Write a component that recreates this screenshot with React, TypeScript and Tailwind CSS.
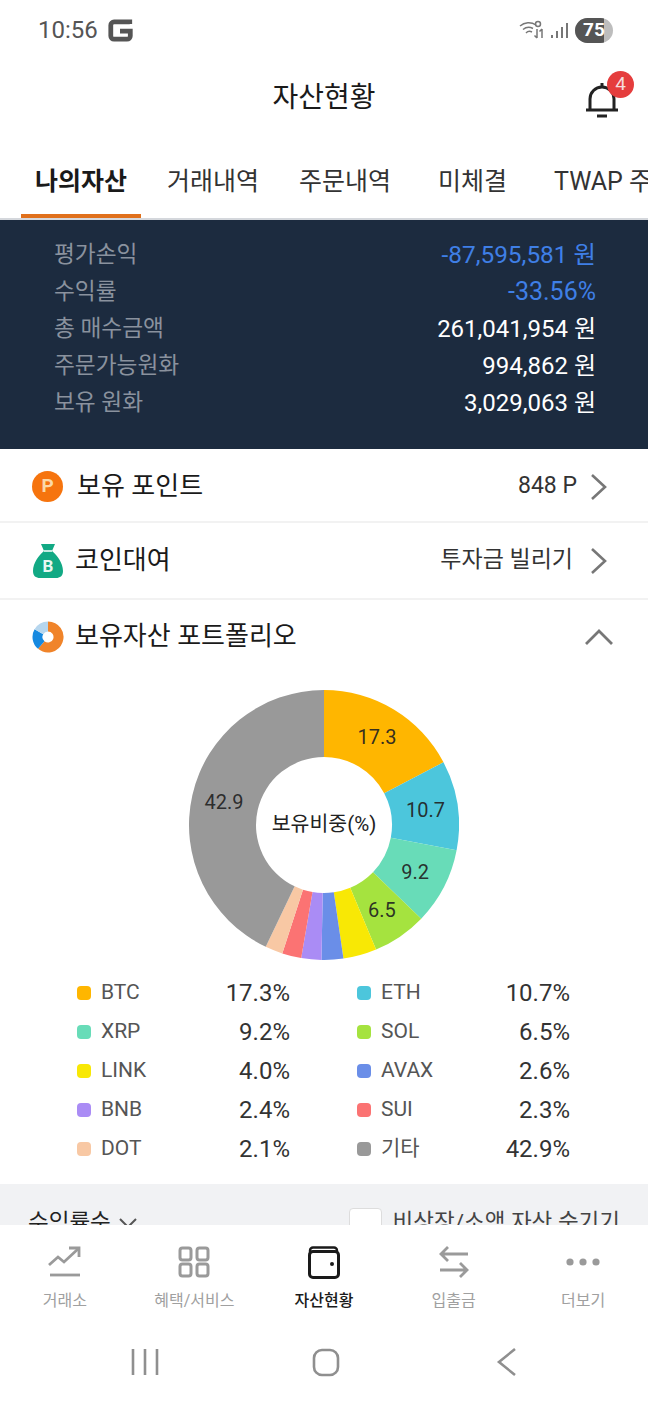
import React from "react";

const font = { fontFamily: 'Roboto, "Noto Sans CJK KR", sans-serif' };

const slices = [
  { v: 17.3, c: "#ffb600", n: "BTC", l: "17.3" },
  { v: 10.7, c: "#4cc6dc", n: "ETH", l: "10.7" },
  { v: 9.2, c: "#68dcb8", n: "XRP", l: "9.2" },
  { v: 6.5, c: "#a5e33f", n: "SOL", l: "6.5" },
  { v: 4.0, c: "#f8e805", n: "LINK" },
  { v: 2.6, c: "#6a8ee8", n: "AVAX" },
  { v: 2.4, c: "#aa8cf5", n: "BNB" },
  { v: 2.3, c: "#fb7373", n: "SUI" },
  { v: 2.1, c: "#f8c8a4", n: "DOT" },
  { v: 42.9, c: "#999999", n: "기타", l: "42.9" },
];

function Donut() {
  const cx = 135, cy = 135, R = 135, r = 68;
  let acc = 0;
  const pt = (rad: number, p: number) => {
    const a = (p / 100) * 2 * Math.PI;
    return [cx + rad * Math.sin(a), cy - rad * Math.cos(a)];
  };
  return (
    <svg width="270" height="270" viewBox="0 0 270 270" className="block">
      {slices.map((s) => {
        const a0 = acc;
        const a1 = acc + s.v;
        acc = a1;
        const [x0, y0] = pt(R, a0);
        const [x1, y1] = pt(R, a1);
        const [x2, y2] = pt(r, a1);
        const [x3, y3] = pt(r, a0);
        const mid = pt(R * 0.76, (a0 + a1) / 2);
        return (
          <g key={s.n}>
            <path
              d={`M${x0} ${y0}A${R} ${R} 0 0 1 ${x1} ${y1}L${x2} ${y2}A${r} ${r} 0 0 0 ${x3} ${y3}Z`}
              fill={s.c}
            />
            {s.l && (
              <text x={mid[0]} y={mid[1]} textAnchor="middle" dominantBaseline="central" fontSize="20" fill="#222" fillOpacity="0.92" style={font}>
                {s.l}
              </text>
            )}
          </g>
        );
      })}
      <text x="135" y="134" textAnchor="middle" dominantBaseline="central" fontSize="20.5" fill="#222" style={font}>
        보유비중(%)
      </text>
    </svg>
  );
}

const summary = [
  ["평가손익", "-87,595,581 원", "text-[#3f7fe6] text-[24.4px]"],
  ["수익률", "-33.56%", "text-[#3f7fe6] text-[25px]"],
  ["총 매수금액", "261,041,954 원", "text-white text-[24px]"],
  ["주문가능원화", "994,862 원", "text-white text-[24px]"],
  ["보유 원화", "3,029,063 원", "text-white text-[24px]"],
];

const legend = [
  ["BTC", "17.3%", "#ffb600"], ["ETH", "10.7%", "#4cc6dc"],
  ["XRP", "9.2%", "#68dcb8"], ["SOL", "6.5%", "#a5e33f"],
  ["LINK", "4.0%", "#f8e805"], ["AVAX", "2.6%", "#6a8ee8"],
  ["BNB", "2.4%", "#aa8cf5"], ["SUI", "2.3%", "#fb7373"],
  ["DOT", "2.1%", "#f8c8a4"], ["기타", "42.9%", "#999999"],
];

const Chevron = () => (
  <svg width="20" height="30" viewBox="0 0 20 30" fill="none" stroke="#777" strokeWidth="2.6">
    <path d="M3 3l13 12L3 27" />
  </svg>
);

const navGray = "#9a9a9a";
const navItems = [
  {
    t: "거래소",
    i: (
      <svg width="36" height="36" viewBox="0 0 36 36" fill="none" stroke={navGray} strokeWidth="2.8">
        <path d="M2 21l9-8 6 5L31 5" /><path d="M22 4h10v9" /><path d="M3 31h30" />
      </svg>
    ),
  },
  {
    t: "혜택/서비스",
    i: (
      <svg width="34" height="34" viewBox="0 0 34 34" fill="none" stroke={navGray} strokeWidth="3">
        <rect x="3" y="3" width="11" height="12" rx="2.5" /><rect x="20" y="3" width="11" height="12" rx="2.5" />
        <rect x="3" y="19" width="11" height="12" rx="2.5" /><rect x="20" y="19" width="11" height="12" rx="2.5" />
      </svg>
    ),
  },
  {
    t: "자산현황",
    active: true,
    i: (
      <svg width="36" height="36" viewBox="0 0 36 36" fill="none" stroke="#1a1a1a" strokeWidth="3">
        <path d="M4 10V6.5A3 3 0 0 1 7 3.5h21a3 3 0 0 1 3 3V9" strokeWidth="2.4" />
        <rect x="3.5" y="7.5" width="29" height="26" rx="3.5" />
        <circle cx="26" cy="20" r="2" fill="#1a1a1a" stroke="none" />
      </svg>
    ),
  },
  {
    t: "입출금",
    i: (
      <svg width="34" height="34" viewBox="0 0 34 34" fill="none" stroke={navGray} strokeWidth="2.8">
        <path d="M31 9H5M11 2L4 9l7 7" /><path d="M3 25h26M23 18l7 7-7 7" />
      </svg>
    ),
  },
  {
    t: "더보기",
    i: (
      <svg width="36" height="36" viewBox="0 0 36 36" fill={navGray}>
        <circle cx="5" cy="18" r="3.6" /><circle cx="18" cy="18" r="3.6" /><circle cx="31" cy="18" r="3.6" />
      </svg>
    ),
  },
];

function StatusBar() {
  return (
    <div className="flex h-[60px] items-center justify-between pl-[38px] pr-[35px]">
      <div className="flex items-center gap-[9px]">
        <span className="text-[24px] text-[#555]">10:56</span>
        <svg width="26" height="26" viewBox="0 0 24 24" fill="none" stroke="#555" strokeWidth="4.4">
          <path d="M21 6.5V4.5H6.5A3 3 0 0 0 3.5 7.5v10a3 3 0 0 0 3 3h12a3 3 0 0 0 3-3v-4.5H12" />
        </svg>
      </div>
      <div className="flex items-center gap-[3px]">
        <svg width="28" height="22" viewBox="0 0 28 22" fill="none" stroke="#777" strokeWidth="1.5">
          <path d="M1 7a13 13 0 0 1 16-1M4 10.500a9 9 0 0 1 10-1M7 14a5 5 0 0 1 6-1" />
          <path d="M18 10v9M15.500 16.500l2.500 2.500M23 19v-9M20.500 12.500l2.500-2.500" />
          <circle cx="19" cy="5" r="2.500" />
        </svg>
        <svg width="20" height="20" viewBox="0 0 20 20" fill="#777">
          <rect x="1" y="15" width="2" height="3" /><rect x="6" y="11" width="2" height="7" />
          <rect x="11" y="7" width="2" height="11" /><rect x="16" y="3" width="2" height="15" />
        </svg>
        <div className="relative ml-[2px] flex h-[25px] w-[38px] items-center justify-center overflow-hidden rounded-full bg-[#bdbdbd]">
          <div className="absolute inset-y-0 left-0 w-[29px] bg-[#555]" />
          <span className="relative text-[19px] font-bold text-white">75</span>
        </div>
      </div>
    </div>
  );
}

export default function App() {
  return (
    <div className="flex h-[1404px] w-[648px] flex-col overflow-hidden bg-white" style={font}>
      <StatusBar />
      <header className="relative flex h-[75px] shrink-0 items-center justify-center">
        <h1 className="text-[28px] text-[#1a1a1a]">자산현황</h1>
        <div className="absolute right-[14px] top-[11px] h-[52px] w-[52px]">
          <svg width="40" height="44" viewBox="0 0 40 44" fill="none" stroke="#222" strokeWidth="3" className="absolute left-0 top-[7px]">
            <path d="M4 32h32M8 31V21a12 12 0 0 1 24 0v10" /><path d="M20 5v4M15 38h10" />
          </svg>
          <div className="absolute right-0 top-0 flex h-[27px] w-[27px] items-center justify-center rounded-full bg-[#e53d3d] text-[19px] text-[#f6dcdc]">4</div>
        </div>
      </header>
      <nav className="flex h-[85px] shrink-0 items-end overflow-hidden whitespace-nowrap border-b-2 border-[#d4d7dc] text-[25px] text-[#333]">
        <div className="ml-[21px] flex h-[83px] w-[120px] shrink-0 items-center justify-center border-b-4 border-[#e0701c] pt-[14px] font-bold text-[#1a1a1a]">나의자산</div>
        <div className="ml-[26px] flex h-[83px] shrink-0 items-center pt-[14px] pb-[4px]">거래내역</div>
        <div className="ml-[40px] flex h-[83px] shrink-0 items-center pt-[14px] pb-[4px]">주문내역</div>
        <div className="ml-[47px] flex h-[83px] shrink-0 items-center pt-[14px] pb-[4px]">미체결</div>
        <div className="ml-[47px] flex h-[83px] shrink-0 items-center pt-[14px] pb-[4px]">TWAP 주문</div>
      </nav>
      <section className="flex h-[229px] shrink-0 flex-col bg-[#1c2b3f] pl-[54px] pr-[52px] pt-[17px]">
        {summary.map(([a, b, c]) => (
          <div key={a} className="flex h-[36.8px] items-center justify-between">
            <span className="text-[22.7px] text-[#8a929e]">{a}</span>
            <span className={c}>{b}</span>
          </div>
        ))}
      </section>
      <div className="flex h-[74px] shrink-0 items-center justify-between border-b-2 border-[#f2f2f2] pl-[32px] pr-[39px] pt-[3px]">
        <div className="flex items-center gap-[14px]">
          <div className="flex h-[31px] w-[31px] items-center justify-center rounded-full bg-[#f6740e] text-[19px] font-bold text-[#fbd9a8]">P</div>
          <span className="text-[26px] text-[#1a1a1a]">보유 포인트</span>
        </div>
        <div className="flex items-center gap-[12px] text-[23px] text-[#333]">
          <span>848 P</span><Chevron />
        </div>
      </div>
      <div className="flex h-[77px] shrink-0 items-center justify-between border-b-2 border-[#f2f2f2] pl-[32px] pr-[39px]">
        <div className="flex items-center gap-[11px]">
          <svg width="32" height="36" viewBox="0 0 32 36">
            <path d="M9 1h14l-3 7c5 4 11 12 11 20 0 5-3 7-7 7H8c-4 0-7-2-7-7 0-8 6-16 11-20z" fill="#12a984" />
            <path d="M12 8h8" stroke="#fff" strokeWidth="1.5" />
            <text x="16" y="29" textAnchor="middle" fontSize="17" fontWeight="700" fill="#e8f7f2" style={font}>B</text>
          </svg>
          <span className="text-[26px] text-[#1a1a1a]">코인대여</span>
        </div>
        <div className="flex items-center gap-[16px] text-[23px] text-[#333]">
          <span>투자금 빌리기</span><Chevron />
        </div>
      </div>
      <div className="flex h-[75px] shrink-0 items-center justify-between pl-[32px] pr-[34px] pb-[2px]">
        <div className="flex items-center gap-[11px]">
          <svg width="32" height="32" viewBox="0 0 32 32" fill="none" strokeWidth="10">
            <path d="M16 5.500A10.500 10.500 0 1 1 9.250 24.040" stroke="#f0842a" />
            <path d="M9.250 24.040A10.500 10.500 0 0 1 6.910 10.750" stroke="#1689e0" />
            <path d="M6.910 10.750A10.500 10.500 0 0 1 16 5.500" stroke="#b6d6ee" />
          </svg>
          <span className="text-[26px] text-[#1a1a1a]">보유자산 포트폴리오</span>
        </div>
        <svg width="30" height="18" viewBox="0 0 30 18" fill="none" stroke="#777" strokeWidth="2.800">
          <path d="M2 16L15 3l13 13" />
        </svg>
      </div>
      <div className="flex shrink-0 justify-center pt-[15px]"><Donut /></div>
      <div className="grid shrink-0 grid-cols-[280px_214px] pl-[77px] pt-[13px]">
        {legend.map(([n, v, c]) => (
          <div key={n} className="flex h-[39px] w-[213px] items-center">
            <span className="h-[14px] w-[14px] rounded-[4px]" style={{ backgroundColor: c }} />
            <span className="ml-[10px] text-[21px] text-[#555]">{n}</span>
            <span className="ml-auto text-[24px] text-[#333]">{v}</span>
          </div>
        ))}
      </div>
      <div className="mt-[16px] min-h-0 flex-1 overflow-hidden bg-[#f1f2f4] pl-[28px] pr-[28px] pt-[22px]">
        <div className="flex items-center justify-between text-[22.5px] text-[#222]">
          <div className="flex items-center gap-[8px]">
            <span>수익률순</span>
            <svg width="18" height="12" viewBox="0 0 18 12" fill="none" stroke="#555" strokeWidth="2"><path d="M1 2l8 8 8-8" /></svg>
          </div>
          <div className="flex items-center gap-[11px]">
            <div className="h-[30px] w-[33px] rounded-[4px] border border-[#ddd] bg-white" />
            <span className="text-[#444]">비상장/소액 자산 숨기기</span>
          </div>
        </div>
      </div>
      <div className="flex h-[100px] shrink-0 bg-white pt-[16px]">
        {navItems.map((n) => (
          <div key={n.t} className="flex flex-1 flex-col items-center">
            <div className="flex h-[42px] items-center">{n.i}</div>
            <span className={`mt-[6px] text-[16px] ${n.active ? "font-medium text-[#1a1a1a]" : "text-[#a0a0a0]"}`}>{n.t}</span>
          </div>
        ))}
      </div>
      <div className="flex h-[79px] shrink-0 items-start justify-center bg-white pt-[22px]">
        <svg width="400" height="30" viewBox="0 0 400 30" fill="none" stroke="#8f8f8f" strokeWidth="2.6">
          <path d="M9 2v26M21 2v26M33 2v26" />
          <rect x="190" y="3" width="24" height="25" rx="8" />
          <path d="M391 2l-16 13 16 13" />
        </svg>
      </div>
    </div>
  );
}
